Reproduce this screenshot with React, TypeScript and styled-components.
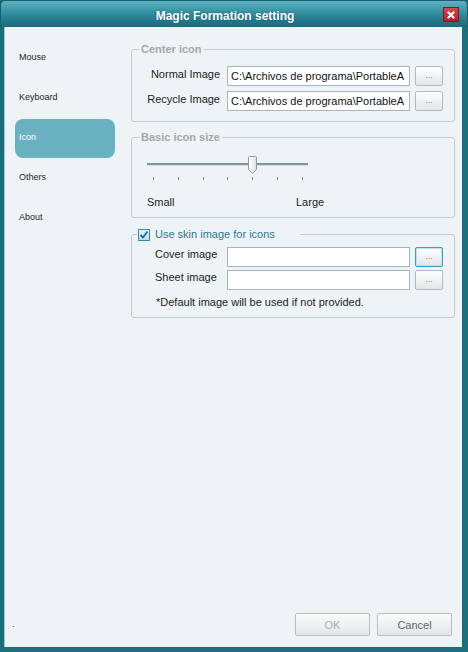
import React from "react";
import styled, { createGlobalStyle, css } from "styled-components";

const Global = createGlobalStyle`
  html, body { margin: 0; padding: 0; background: #1d6b7a; }
  body { font-family: "Liberation Sans", Arial, sans-serif; }
  * { box-sizing: border-box; }
`;

const Window = styled.div`
  width: 468px;
  height: 652px;
  display: flex;
  flex-direction: column;
  background: #1b6675;
  border-radius: 5px 5px 0 0;
  overflow: hidden;
`;

const TitleBar = styled.div`
  height: 27px;
  flex: none;
  display: flex;
  align-items: center;
  justify-content: center;
  padding-right: 18px;
  position: relative;
  background: linear-gradient(#62b2c1 0%, #3a98a9 35%, #23798a 75%, #1b6b7b 100%);
  border: 1px solid #17606e;
  border-bottom: none;
  border-radius: 5px 5px 0 0;
`;

const Title = styled.div`
  color: #ffffff;
  font: bold 12px/14px "Liberation Sans", Arial, sans-serif;
  margin-top: 3px;
  text-shadow: 0 0 2px rgba(10, 60, 70, 0.6);
`;

const CloseButton = styled.div`
  position: absolute;
  right: 8px;
  top: 6px;
  width: 16px;
  height: 15px;
  border: 1px solid #7d1a1d;
  background: linear-gradient(#d8474a, #b81f25);
  display: flex;
  align-items: center;
  justify-content: center;
`;

const Frame = styled.div`
  flex: 1;
  display: flex;
  min-height: 0;
  border-left: 4px solid #1d6e7d;
  border-right: 6px solid #1d6e7d;
  border-bottom: 5px solid #1d6e7d;
  background: #eef3f6;
  box-shadow: inset 1px 0 0 #9cc4cd;
`;

const Sidebar = styled.nav`
  width: 127px;
  flex: none;
  display: flex;
  flex-direction: column;
  padding-top: 12px;
`;

const NavItem = styled.div<{ $active?: boolean }>`
  width: 100px;
  height: 39px;
  margin: 0 0 1px 11px;
  padding: 0 0 3px 4px;
  display: flex;
  align-items: center;
  font-size: 9px;
  color: #1e1e1e;
  border-radius: 8px;
  ${(p) =>
    p.$active &&
    css`
      background: #6ab1c1;
      color: #ffffff;
    `}
`;

const Footnote = styled.div`
  margin-top: auto;
  margin-bottom: 18px;
  padding-left: 8px;
  font-size: 9px;
  color: #333;
`;

const Main = styled.main`
  flex: 1;
  display: flex;
  flex-direction: column;
  padding: 16px 7px 11px 0;
  gap: 9px;
`;

const Group = styled.fieldset<{ $pt: number; $pb: number; $mt?: number }>`
  margin: ${(p) => p.$mt ?? 0}px 0 0 0;
  min-width: 0;
  border: 1px solid #c4cbcf;
  border-radius: 3px;
  padding: ${(p) => p.$pt}px 0 ${(p) => p.$pb}px 0;
`;

const Legend = styled.legend`
  margin-left: 7px;
  padding: 0 2px;
  font: bold 11px/12px "Liberation Sans", Arial, sans-serif;
  color: #a2a8ac;
`;

const CheckLegend = styled.legend`
  margin-left: 5px;
  padding: 0 1px;
  width: 163px;
  display: flex;
  align-items: center;
  gap: 5px;
  font: 11px/13px "Liberation Sans", Arial, sans-serif;
  color: #2f7796;
`;

const CheckBox = styled.span`
  width: 12px;
  height: 12px;
  flex: none;
  border: 1px solid #3b86b0;
  background: linear-gradient(#e4f3fb, #bfe0f1);
  display: flex;
  align-items: center;
  justify-content: center;
`;

const Rows = styled.div<{ $gap: number }>`
  display: grid;
  grid-template-columns: 90px 183px 28px;
  column-gap: 5px;
  row-gap: ${(p) => p.$gap}px;
`;

const Label = styled.div<{ $left?: boolean; $pt: number }>`
  font-size: 11px;
  line-height: 13px;
  color: #1c1c1c;
  white-space: nowrap;
  padding-top: ${(p) => p.$pt}px;
  ${(p) =>
    p.$left
      ? css`
          padding-left: 23px;
        `
      : css`
          text-align: right;
          padding-right: 2px;
        `}
`;

const Field = styled.div`
  height: 20px;
  border: 1px solid #a9b3b9;
  background: #ffffff;
  padding: 0 3px;
  font-size: 11px;
  line-height: 18px;
  color: #111;
  white-space: nowrap;
  overflow: hidden;
`;

const Browse = styled.div<{ $focused?: boolean }>`
  height: 20px;
  border: 1px solid #b2babf;
  border-radius: 2px;
  background: linear-gradient(#fdfefe, #e3e7e9);
  display: flex;
  align-items: center;
  justify-content: center;
  font-size: 9px;
  color: #7d868b;
  padding-bottom: 2px;
  ${(p) =>
    p.$focused &&
    css`
      border-color: #3c9cc2;
      box-shadow: inset 0 0 0 1px #bde2f0;
    `}
`;

const Note = styled.div`
  grid-column: 1 / -1;
  margin-top: 3px;
  padding-left: 24px;
  font-size: 11px;
  line-height: 13px;
  color: #1c1c1c;
`;

const Slider = styled.div`
  position: relative;
  width: 161px;
  height: 18px;
  margin-left: 15px;
  padding-top: 7px;
`;

const Track = styled.div`
  height: 2px;
  background: #7e979f;
  box-shadow: 0 1px 0 #d5dee2;
`;

const Thumb = styled.div`
  position: absolute;
  left: 101px;
  top: 0;
  width: 9px;
  height: 18px;
  line-height: 0;
`;

const Ticks = styled.div`
  width: 161px;
  margin: 3px 0 0 15px;
  padding: 0 5px 0 6px;
  display: flex;
  justify-content: space-between;
`;

const Tick = styled.span`
  width: 1px;
  height: 3px;
  background: #7f888d;
`;

const Scale = styled.div`
  display: grid;
  grid-template-columns: 149px auto;
  margin: 16px 0 0 15px;
  font-size: 11px;
  line-height: 13px;
  color: #1c1c1c;
`;

const Footer = styled.div`
  margin-top: auto;
  display: flex;
  justify-content: flex-end;
  gap: 7px;
  padding-right: 3px;
`;

const DialogButton = styled.div<{ $disabled?: boolean }>`
  width: 75px;
  height: 23px;
  border: 1px solid #b7bdc1;
  border-radius: 2px;
  background: linear-gradient(#fbfcfc, #e2e6e8);
  display: flex;
  align-items: center;
  justify-content: center;
  font-size: 11px;
  color: ${(p) => (p.$disabled ? "#a9aeb1" : "#5e6569")};
`;

const navItems = ["Mouse", "Keyboard", "Icon", "Others", "About"];

export default function App() {
  return (
    <>
      <Global />
      <Window>
        <TitleBar>
          <Title>Magic Formation setting</Title>
          <CloseButton>
            <svg width="8" height="8" viewBox="0 0 8 8">
              <path d="M1.5 1.5 L6.5 6.5 M6.5 1.5 L1.5 6.5" stroke="#fff" strokeWidth="2" strokeLinecap="square" />
            </svg>
          </CloseButton>
        </TitleBar>
        <Frame>
          <Sidebar>
            {navItems.map((n) => (
              <NavItem key={n} $active={n === "Icon"}>
                {n}
              </NavItem>
            ))}
            <Footnote>.</Footnote>
          </Sidebar>
          <Main>
            <Group $pt={11} $pb={10}>
              <Legend>Center icon</Legend>
              <Rows $gap={5}>
                <Label $pt={2}>Normal Image</Label>
                <Field>C:\Archivos de programa\PortableA</Field>
                <Browse>...</Browse>
                <Label $pt={2}>Recycle Image</Label>
                <Field>C:\Archivos de programa\PortableA</Field>
                <Browse>...</Browse>
              </Rows>
            </Group>

            <Group $pt={13} $pb={8}>
              <Legend>Basic icon size</Legend>
              <Slider>
                <Track />
                <Thumb>
                  <svg width="9" height="18" viewBox="0 0 9 18">
                    <defs>
                      <linearGradient id="thumbFill" x1="0" y1="0" x2="1" y2="0">
                        <stop offset="0" stopColor="#ffffff" />
                        <stop offset="1" stopColor="#d9e0e3" />
                      </linearGradient>
                    </defs>
                    <path
                      d="M0.5 1.5 Q0.5 0.5 1.5 0.5 L7.5 0.5 Q8.5 0.5 8.5 1.5 L8.5 13.5 L4.5 17.5 L0.5 13.5 Z"
                      fill="url(#thumbFill)"
                      stroke="#8c9aa0"
                    />
                  </svg>
                </Thumb>
              </Slider>
              <Ticks>
                {Array.from({ length: 7 }).map((_, i) => (
                  <Tick key={i} />
                ))}
              </Ticks>
              <Scale>
                <span>Small</span>
                <span>Large</span>
              </Scale>
            </Group>

            <Group $pt={6} $pb={8} $mt={1}>
              <CheckLegend>
                <CheckBox>
                  <svg width="10" height="10" viewBox="0 0 10 10">
                    <path d="M1.5 5 L4 7.5 L8.5 1.5" fill="none" stroke="#1b69a3" strokeWidth="1.8" />
                  </svg>
                </CheckBox>
                Use skin image for icons
              </CheckLegend>
              <Rows $gap={3}>
                <Label $left $pt={1}>Cover image</Label>
                <Field />
                <Browse $focused>...</Browse>
                <Label $left $pt={1}>Sheet image</Label>
                <Field />
                <Browse>...</Browse>
                <Note>*Default image will be used if not provided.</Note>
              </Rows>
            </Group>

            <Footer>
              <DialogButton $disabled>OK</DialogButton>
              <DialogButton>Cancel</DialogButton>
            </Footer>
          </Main>
        </Frame>
      </Window>
    </>
  );
}
